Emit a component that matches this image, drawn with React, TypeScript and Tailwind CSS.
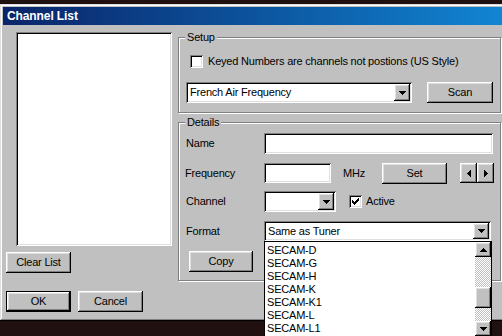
import React from "react";

const raised =
  "bg-[#c0c0c0] shadow-[inset_-1px_-1px_0_#000,inset_1px_1px_0_#fff,inset_-2px_-2px_0_#808080,inset_2px_2px_0_#dfdfdf]";
const sunken =
  "bg-white shadow-[inset_1px_1px_0_#808080,inset_-1px_-1px_0_#fff,inset_2px_2px_0_#000,inset_-2px_-2px_0_#dfdfdf]";

function Tri({ dir }: { dir: "down" | "up" | "left" | "right" }) {
  const pts = {
    down: "0,0 7,0 3.5,4",
    up: "0,4 7,4 3.5,0",
    left: "4,0 4,7 0,3.5",
    right: "0,0 0,7 4,3.5",
  }[dir];
  const w = dir === "left" || dir === "right" ? 4 : 7;
  const h = dir === "left" || dir === "right" ? 7 : 4;
  return (
    <svg width={w} height={h} viewBox={`0 0 ${w} ${h}`} shapeRendering="crispEdges">
      <polygon points={pts} fill="#000" />
    </svg>
  );
}

function Button({ label, className = "" }: { label: string; className?: string }) {
  return (
    <div className={`${raised} flex items-center justify-center h-[21px] ${className}`}>
      {label}
    </div>
  );
}

function Combo({ value, className = "" }: { value?: string; className?: string }) {
  return (
    <div className={`${sunken} flex items-center p-[2px] ${className}`}>
      <span className="flex-1 pl-[2px] truncate">{value}</span>
      <div className={`${raised} w-[16px] h-full flex items-center justify-center`}>
        <Tri dir="down" />
      </div>
    </div>
  );
}

function Check({ checked }: { checked?: boolean }) {
  return (
    <div className={`${sunken} w-[13px] h-[13px] flex items-center justify-center shrink-0`}>
      {checked && (
        <svg width="7" height="7" viewBox="0 0 7 7" shapeRendering="crispEdges">
          <path d="M0 2h1v1h1v1h1V3h1V2h1V1h1V0h1v3H6v1H5v1H4v1H3v1H2V6H1V5H0z" fill="#000" />
        </svg>
      )}
    </div>
  );
}

function Group({ title, className = "", children }: { title: string; className?: string; children: React.ReactNode }) {
  return (
    <div className={`relative border border-[#808080] shadow-[inset_1px_1px_0_#fff,1px_1px_0_#fff] ${className}`}>
      <span className="absolute -top-[8px] left-[6px] bg-[#c0c0c0] px-[2px] leading-[14px]">{title}</span>
      {children}
    </div>
  );
}

const formats = ["SECAM-D", "SECAM-G", "SECAM-H", "SECAM-K", "SECAM-K1", "SECAM-L", "SECAM-L1"];

export default function App() {
  return (
    <div className="relative w-[502px] h-[336px] overflow-hidden bg-[#20100f] pt-[4px] font-['Liberation_Sans',Arial,sans-serif] text-[11px] tracking-[-0.2px] text-black leading-none select-none">
      <div className="w-[520px] h-[317px] bg-[#c0c0c0] p-[3px] flex flex-col shadow-[inset_-1px_-1px_0_#000,inset_1px_1px_0_#dfdfdf,inset_-2px_-2px_0_#808080,inset_2px_2px_0_#fff]">
        {/* Title bar */}
        <div className="h-[18px] shrink-0 flex items-center pl-[4px] bg-linear-to-r from-[#0a246a] to-[#1288d6] text-white font-bold text-[12px] tracking-[-0.1px]">
          Channel List
        </div>

        <div className="flex flex-1">
          {/* Left column */}
          <div className="w-[175px] shrink-0 flex flex-col">
            <div className={`${sunken} ml-[13px] mt-[7px] w-[156px] h-[214px]`} />
            <Button label="Clear List" className="ml-[3px] mt-[6px] w-[65px]" />
            <div className="flex gap-[7px] ml-[3px] mt-[18px]">
              <div className="w-[65px] h-[21px] flex items-center justify-center bg-[#c0c0c0] shadow-[inset_0_0_0_1px_#000,inset_-2px_-2px_0_#000,inset_2px_2px_0_#fff,inset_-3px_-3px_0_#808080,inset_3px_3px_0_#dfdfdf]">
                OK
              </div>
              <Button label="Cancel" className="w-[65px]" />
            </div>
          </div>

          {/* Right column */}
          <div className="flex flex-col">
            <Group title="Setup" className="mt-[12px] w-[323px] h-[76px] pl-[7px]">
              <div className="flex items-center gap-[5px] ml-[4px] mt-[17px] h-[13px]">
                <Check />
                <span>Keyed Numbers are channels not postions (US Style)</span>
              </div>
              <div className="flex mt-[14px]">
                <Combo value="French Air Frequency" className="w-[226px] h-[21px]" />
                <Button label="Scan" className="ml-[15px] w-[66px]" />
              </div>
            </Group>

            <Group title="Details" className="mt-[9px] w-[323px] h-[159px] pl-[7px] pt-[10px]">
              <div className="flex items-center h-[21px]">
                <span className="w-[78px]">Name</span>
                <div className={`${sunken} w-[229px] h-[21px]`} />
              </div>
              <div className="flex items-center h-[20px] mt-[9px]">
                <span className="w-[78px] -ml-[1px] mr-[1px]">Frequency</span>
                <div className={`${sunken} w-[67px] h-[20px]`} />
                <span className="ml-[12px] w-[39px]">MHz</span>
                <Button label="Set" className="w-[65px] h-[20px]" />
                <div className="flex ml-[13px]">
                  <div className={`${raised} w-[17px] h-[20px] flex items-center justify-center`}>
                    <Tri dir="left" />
                  </div>
                  <div className={`${raised} w-[17px] h-[20px] flex items-center justify-center`}>
                    <Tri dir="right" />
                  </div>
                </div>
              </div>
              <div className="flex items-center h-[21px] mt-[8px]">
                <span className="w-[78px]">Channel</span>
                <Combo className="w-[72px] h-[21px]" />
                <div className="ml-[13px] flex items-center gap-[4px]">
                  <Check checked />
                  <span>Active</span>
                </div>
              </div>
              <div className="flex items-center h-[20px] mt-[9px]">
                <span className="w-[78px]">Format</span>
                <div className="relative">
                  <Combo value="Same as Tuner" className="w-[227px] h-[20px]" />
                  {/* Open dropdown list */}
                  <div className="absolute z-10 top-full left-0 w-[228px] h-[96px] bg-white border border-black flex">
                    <div className="flex-1 pt-[2px] pl-[2px]">
                      {formats.map((f) => (
                        <div key={f} className="h-[13px] flex items-center">
                          {f}
                        </div>
                      ))}
                    </div>
                    <div className="w-[16px] flex flex-col">
                      <div className={`${raised} h-[15px] flex items-center justify-center`}>
                        <Tri dir="up" />
                      </div>
                      <div className="flex-1 bg-[image:repeating-conic-gradient(#c0c0c0_0%_25%,#fff_0%_50%)] bg-[length:2px_2px]">
                        <div className={`${raised} h-[21px] mt-[30px]`} />
                      </div>
                      <div className={`${raised} h-[15px] flex items-center justify-center`}>
                        <Tri dir="down" />
                      </div>
                    </div>
                  </div>
                </div>
              </div>
              <Button label="Copy" className="ml-[3px] mt-[10px] w-[64px]" />
            </Group>
          </div>
        </div>
      </div>
    </div>
  );
}
